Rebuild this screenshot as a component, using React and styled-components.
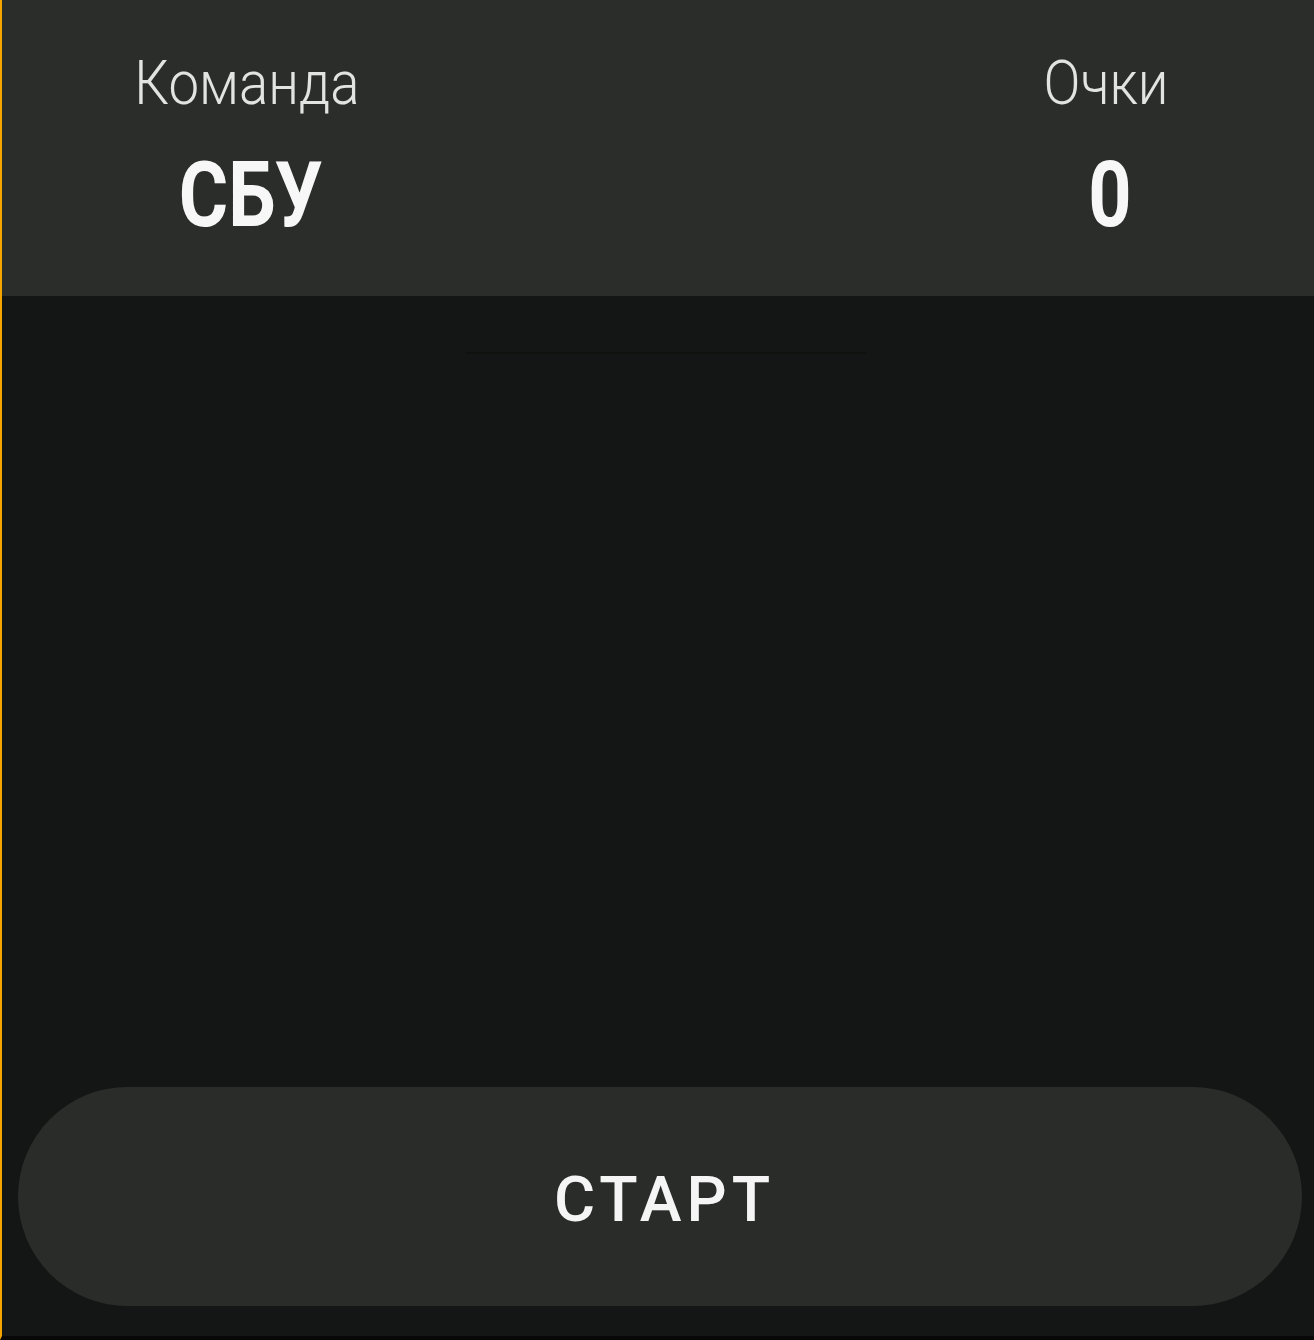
import React from "react";
import styled, { createGlobalStyle } from "styled-components";

const Global = createGlobalStyle`
  html, body { margin: 0; padding: 0; background: #131614; }
  body { font-family: Roboto, "Noto Sans", sans-serif; }
`;

const Screen = styled.div`
  width: 1314px;
  height: 1340px;
  box-sizing: border-box;
  border-left: 2px solid #f5a400;
  border-bottom: 4px solid #070807;
  background: #131614;
  display: flex;
  flex-direction: column;
`;

const Header = styled.header`
  height: 296px;
  flex: none;
  box-sizing: border-box;
  background: #2a2d2a;
  display: flex;
  justify-content: space-between;
  padding: 52px 58px 0 95px;
`;

const Column = styled.div`
  width: 300px;
  display: flex;
  flex-direction: column;
  align-items: center;
  gap: 37px;
`;

const Label = styled.span`
  display: inline-block;
  font-family: Roboto, sans-serif;
  font-weight: 300;
  font-size: 62px;
  line-height: 62px;
  color: #e2e4e2;
  transform: scaleX(0.88);
  white-space: nowrap;
`;

const Value = styled.span`
  display: inline-block;
  margin-left: 7px;
  font-family: Roboto, sans-serif;
  font-weight: 700;
  font-size: 90px;
  line-height: 90px;
  color: #f6f7f6;
  transform: scaleX(0.84);
  white-space: nowrap;
`;

const Body = styled.main`
  flex: 1;
  display: flex;
  flex-direction: column;
  align-items: center;
  padding: 56px 12px 30px 16px;
`;

const Divider = styled.div`
  width: 400px;
  height: 2px;
  background: #0f110f;
  margin-left: 12px;
`;

const Spacer = styled.div`
  flex: 1;
`;

const StartButton = styled.button`
  align-self: stretch;
  height: 219px;
  border: none;
  border-radius: 110px;
  background: #292c29;
  color: #f4f5f4;
  font-family: Roboto, sans-serif;
  font-weight: 500;
  font-size: 63px;
  letter-spacing: 5px;
  padding: 6px 0 0 9px;
  cursor: pointer;
`;

export default function App() {
  return (
    <>
      <Global />
      <Screen>
        <Header>
          <Column>
            <Label>Команда</Label>
            <Value>СБУ</Value>
          </Column>
          <Column>
            <Label>Очки</Label>
            <Value>0</Value>
          </Column>
        </Header>
        <Body>
          <Divider />
          <Spacer />
          <StartButton>СТАРТ</StartButton>
        </Body>
      </Screen>
    </>
  );
}
